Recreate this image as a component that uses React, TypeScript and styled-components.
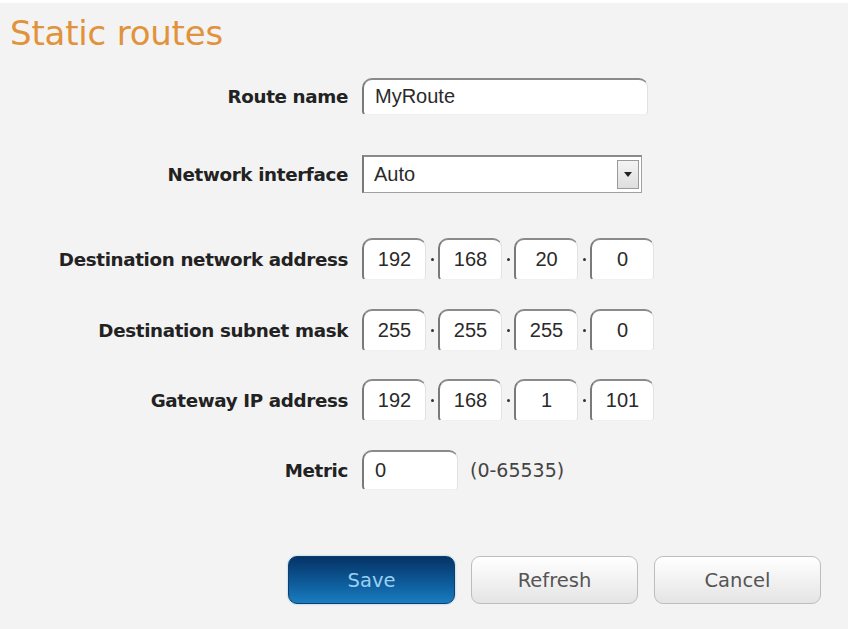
import React from 'react';
import styled, { createGlobalStyle } from 'styled-components';

const GlobalStyle = createGlobalStyle`
  html, body {
    margin: 0;
    padding: 0;
    background: #ffffff;
  }
`;

const Page = styled.div`
  width: 854px;
  height: 629px;
  padding-top: 3px;
  box-sizing: border-box;
  background: #ffffff;
`;

const Panel = styled.div`
  width: 848px;
  height: 626px;
  background: #f3f3f3;
  box-sizing: border-box;
`;

const Title = styled.h1`
  margin: 0;
  height: 60px;
  padding: 10px 0 0 10px;
  box-sizing: border-box;
  font-family: 'DejaVu Sans', Verdana, sans-serif;
  font-weight: normal;
  font-size: 34px;
  line-height: 40px;
  letter-spacing: -0.2px;
  color: #e2923a;
`;

const Row = styled.div<{ $top: number }>`
  display: flex;
  align-items: center;
  height: 40px;
  margin-top: ${(p) => p.$top}px;
`;

const Label = styled.div`
  width: 362px;
  padding-right: 14px;
  box-sizing: border-box;
  text-align: right;
  font-family: 'DejaVu Sans', Verdana, sans-serif;
  font-weight: bold;
  font-size: 18.3px;
  color: #222;
  letter-spacing: -0.35px;
`;

const Field = styled.div<{ $w: number; $h?: number; $center?: boolean }>`
  width: ${(p) => p.$w}px;
  height: ${(p) => p.$h ?? 38}px;
  box-sizing: border-box;
  background: #ffffff;
  border-top: 2px solid #8a8a8a;
  border-left: 2px solid #7a7a7a;
  border-right: 1px solid #e2e2e2;
  border-bottom: 1px solid #f0f0f0;
  border-radius: 10px 9px 4px 4px;
  display: flex;
  align-items: center;
  justify-content: ${(p) => (p.$center ? 'center' : 'flex-start')};
  padding: 0 11px;
  font-family: 'Liberation Sans', Arial, sans-serif;
  font-size: 20px;
  color: #2a2a2a;
`;

const Select = styled.div`
  width: 280px;
  height: 38px;
  box-sizing: border-box;
  background: #ffffff;
  border: 1px solid #a0a0a0;
  border-top: 2px solid #8a8a8a;
  border-left: 2px solid #7a7a7a;
  display: flex;
  align-items: center;
  justify-content: space-between;
  padding: 0 2px 0 10px;
  font-family: 'Liberation Sans', Arial, sans-serif;
  font-size: 20px;
  color: #2a2a2a;
`;

const SelectButton = styled.div`
  width: 22px;
  height: 29px;
  box-sizing: border-box;
  border: 1px solid #9a9a9a;
  background: linear-gradient(#f4f4f4, #dedede);
  display: flex;
  align-items: center;
  justify-content: center;
`;

const Arrow = styled.div`
  width: 0;
  height: 0;
  border-left: 4px solid transparent;
  border-right: 4px solid transparent;
  border-top: 5px solid #222;
`;

const Dot = styled.div`
  width: 12px;
  display: flex;
  justify-content: center;
  &::before {
    content: '';
    width: 3px;
    height: 3px;
    background: #333;
    border-radius: 50%;
  }
`;

const Hint = styled.span`
  margin-left: 12px;
  font-family: 'DejaVu Sans', Verdana, sans-serif;
  font-size: 19px;
  color: #444;
`;

const Buttons = styled.div`
  display: flex;
  gap: 16px;
  padding-left: 288px;
  margin-top: 66px;
`;

const Button = styled.button<{ $primary?: boolean }>`
  width: 167px;
  height: 48px;
  border-radius: 9px;
  font-family: 'DejaVu Sans', Verdana, sans-serif;
  font-size: 19.5px;
  cursor: pointer;
  border: 1px solid ${(p) => (p.$primary ? '#0b3f70' : '#bdbdbd')};
  background: ${(p) =>
    p.$primary
      ? 'linear-gradient(#063366, #0d5a98 55%, #1a7dc0)'
      : 'linear-gradient(#ffffff, #f2f2f2 50%, #e4e4e4)'};
  color: ${(p) => (p.$primary ? '#9ad0f2' : '#555')};
  box-shadow: ${(p) => (p.$primary ? '0 0 2px #7fb6e0' : 'inset 0 1px 0 #fff')};
`;

const IpField = ({ octets }: { octets: string[] }) => (
  <>
    {octets.map((o, i) => (
      <React.Fragment key={i}>
        {i > 0 && <Dot />}
        <Field $w={64} $h={42} $center>
          {o}
        </Field>
      </React.Fragment>
    ))}
  </>
);

const App = () => {
  return (
    <Page>
      <GlobalStyle />
      <Panel>
        <Title>Static routes</Title>
        <Row $top={13}>
          <Label>Route name</Label>
          <Field $w={286} $h={37}>MyRoute</Field>
        </Row>
        <Row $top={38}>
          <Label>Network interface</Label>
          <Select>
            Auto
            <SelectButton>
              <Arrow />
            </SelectButton>
          </Select>
        </Row>
        <Row $top={45}>
          <Label>Destination network address</Label>
          <IpField octets={['192', '168', '20', '0']} />
        </Row>
        <Row $top={31}>
          <Label>Destination subnet mask</Label>
          <IpField octets={['255', '255', '255', '0']} />
        </Row>
        <Row $top={30}>
          <Label>Gateway IP address</Label>
          <IpField octets={['192', '168', '1', '101']} />
        </Row>
        <Row $top={30}>
          <Label>Metric</Label>
          <Field $w={96} $h={40}>0</Field>
          <Hint>(0-65535)</Hint>
        </Row>
        <Buttons>
          <Button $primary>Save</Button>
          <Button>Refresh</Button>
          <Button>Cancel</Button>
        </Buttons>
      </Panel>
    </Page>
  );
};

export default App;
